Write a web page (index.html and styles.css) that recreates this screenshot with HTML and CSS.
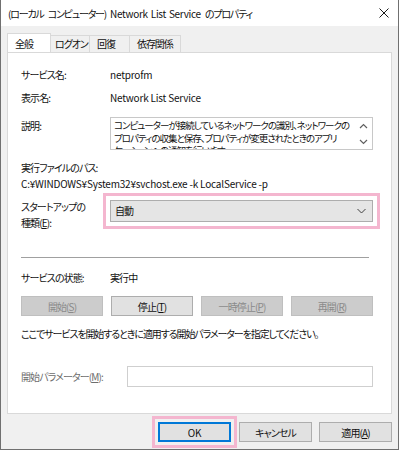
FILE: index.html
```html
<!DOCTYPE html>
<html lang="ja">
<head>
    <meta charset="UTF-8">
    <title>(ローカル コンピューター) Network List Service のプロパティ</title>
    <link rel="stylesheet" href="styles.css">
</head>
<body>
    <div class="window">
        <div class="titlebar">
            <span class="title">(ローカル コンピューター) <span class="latin">Network List Service</span> のプロパティ</span>
            <svg class="close" width="10" height="10" viewBox="0 0 10 10">
                <path d="M0.5 0.5L9.5 9.5M9.5 0.5L0.5 9.5" stroke="#1a1a1a" stroke-width="1" fill="none"/>
            </svg>
        </div>

        <div class="tabs">
            <div class="tab active">全般</div>
            <div class="tab logon">ログオン</div>
            <div class="tab recovery">回復</div>
            <div class="tab deps">依存関係</div>
        </div>

        <div class="panel">
            <div class="row">
                <span class="label">サービス名:</span>
                <span class="latin">netprofm</span>
            </div>
            <div class="row gap-7">
                <span class="label">表示名:</span>
                <span class="latin">Network List Service</span>
            </div>
            <div class="row gap-11 top">
                <span class="label desc-label">説明:</span>
                <div class="desc">
                    <div class="desc-text">コンピューターが接続しているネットワークの識別、ネットワークの<br>プロパティの収集と保存、プロパティが変更されたときのアプリ<br>ケーションへの通知を行います。</div>
                    <div class="scroll">
                        <svg width="9" height="6" viewBox="0 0 9 6"><path d="M1 5L4.5 1.5L8 5" stroke="#606060" stroke-width="1.2" fill="none"/></svg>
                        <svg width="9" height="6" viewBox="0 0 9 6"><path d="M1 1L4.5 4.5L8 1" stroke="#606060" stroke-width="1.2" fill="none"/></svg>
                    </div>
                </div>
            </div>
            <div class="line gap-10">実行ファイルのパス:</div>
            <div class="line latin">C:¥WINDOWS¥System32¥svchost.exe -k LocalService -p</div>
            <div class="row gap-7 top">
                <span class="label">スタートアップの<br>種類(<u>E</u>):</span>
                <div class="combo">
                    <span>自動</span>
                    <svg width="9" height="6" viewBox="0 0 9 6"><path d="M0.5 1L4.5 5L8.5 1" stroke="#404040" stroke-width="1" fill="none"/></svg>
                </div>
            </div>

            <div class="separator"></div>

            <div class="row status">
                <span class="label">サービスの状態:</span>
                <span>実行中</span>
            </div>
            <div class="actions">
                <button class="btn" disabled>開始(<u>S</u>)</button>
                <button class="btn">停止(<u>T</u>)</button>
                <button class="btn" disabled>一時停止(<u>P</u>)</button>
                <button class="btn" disabled>再開(<u>R</u>)</button>
            </div>
            <div class="line gap-10 help">ここでサービスを開始するときに適用する開始パラメーターを指定してください。</div>
            <div class="row params">
                <span class="label muted">開始パラメーター(<u>M</u>):</span>
                <div class="param-input"></div>
            </div>
        </div>

        <div class="footer">
            <button class="btn wide default"><span class="latin">OK</span></button>
            <button class="btn wide">キャンセル</button>
            <button class="btn wide">適用(<u>A</u>)</button>
        </div>
    </div>
</body>
</html>
```

FILE: styles.css
```css
body {
    margin: 0;
    background-color: #ffffff;
    font-family: "Noto Sans CJK JP", sans-serif;
    font-size: 10px;
    letter-spacing: -0.9px;
    font-feature-settings: "palt";
    color: #111;
}

/* latin runs are already narrow, keep them close to natural width */
.latin {
    letter-spacing: -0.2px;
}

u {
    text-underline-offset: 1px;
}

.window {
    width: 399px;
    height: 450px;
    box-sizing: border-box;
    border: 1px solid #707070;
    border-top: none;
    background-color: #f0f0f0;
    display: flex;
    flex-direction: column;
}

.titlebar {
    height: 26px;
    background-color: #fff;
    display: flex;
    align-items: center;
    justify-content: space-between;
    padding: 0 8px 0 7px;
    letter-spacing: -1.2px;
    word-spacing: 3px;
    white-space: nowrap;
}

.titlebar .latin {
    letter-spacing: -0.3px;
    word-spacing: 1px;
}

.close {
    margin-right: 1px;
}

/* tab strip */
.tabs {
    display: flex;
    align-items: flex-end;
    margin-top: 7px;
    padding-left: 6px;
    height: 19px;
}

.tab {
    height: 17px;
    box-sizing: border-box;
    line-height: 16px;
    padding-left: 7px;
    border: 1px solid #d9d9d9;
    border-bottom: none;
    border-left: none;
    background-color: #f0f0f0;
    white-space: nowrap;
    letter-spacing: -1.1px;
    overflow: hidden;
}

.tab.active {
    width: 44px;
    height: 20px;
    margin-bottom: -1px;
    background-color: #fff;
    border-left: 1px solid #d9d9d9;
    padding: 2px 0 0 7px;
}

.tab.logon { width: 39px; padding-left: 4px; }
.tab.recovery { width: 40px; }
.tab.deps { width: 51px; }

.panel {
    margin: 0 6px 0 6px;
    height: 362px;
    box-sizing: border-box;
    border: 1px solid #d9d9d9;
    background-color: #fff;
    padding: 14px 18px 0 13px;
    display: flex;
    flex-direction: column;
}

.row {
    display: flex;
    align-items: center;
    line-height: 16px;
}

.row.top {
    align-items: flex-start;
}

.label {
    width: 89px;
    flex-shrink: 0;
}

.line {
    line-height: 16px;
    white-space: nowrap;
}

.help {
    letter-spacing: -1.1px;
}

.gap-7 { margin-top: 7px; }
.gap-10 { margin-top: 10px; }
.gap-11 { margin-top: 11px; }

.desc-label {
    margin-top: 1px;
}

.desc {
    flex: 1;
    height: 33px;
    box-sizing: border-box;
    border: 1px solid #c8c8c8;
    display: flex;
    overflow: hidden;
}

.desc-text {
    flex: 1;
    height: 31px;
    padding: 1px 0 0 3px;
    box-sizing: border-box;
    font-size: 9.5px;
    line-height: 12.5px;
    letter-spacing: -1px;
    white-space: nowrap;
    overflow: hidden;
}

.scroll {
    width: 17px;
    display: flex;
    flex-direction: column;
    justify-content: space-between;
    align-items: center;
    padding: 5px 0 4px;
}

.combo {
    flex: 1;
    height: 22px;
    margin-top: 1px;
    box-sizing: border-box;
    border: 1px solid #adadad;
    background-color: #e5e5e5;
    display: flex;
    align-items: center;
    justify-content: space-between;
    padding: 0 6px 0 4px;
    outline: 3px solid #f4b6cf;
    outline-offset: 4px;
}

.separator {
    height: 1px;
    background-color: #a0a0a0;
    margin: 26px 4px 0 0;
}

.row.status {
    margin-top: 12px;
}

.actions {
    display: grid;
    grid-template-columns: repeat(4, 1fr);
    gap: 8px;
    margin-top: 10px;
}

.btn {
    height: 20px;
    box-sizing: border-box;
    border: 1px solid #adadad;
    background-color: #e1e1e1;
    font-family: inherit;
    font-size: 10px;
    letter-spacing: -0.9px;
    font-feature-settings: "palt";
    color: #111;
    padding: 0;
}

.btn:disabled {
    background-color: #cccccc;
    border-color: #bfbfbf;
    color: #8a8a8a;
}

.params {
    margin-top: 24px;
}

.params .label {
    width: 106px;
}

.muted {
    color: #6d6d6d;
}

.param-input {
    flex: 1;
    height: 21px;
    box-sizing: border-box;
    border: 1px solid #cfcfcf;
    background-color: #fff;
}

/* OK / Cancel / Apply */
.footer {
    display: flex;
    justify-content: flex-end;
    gap: 7px;
    padding: 8px 6px 0 0;
}

.btn.wide {
    width: 73px;
}

.btn.default {
    border: 2px solid #0078d7;
    outline: 3px solid #f4b6cf;
    outline-offset: 3px;
    margin-right: 1px;
}
```
